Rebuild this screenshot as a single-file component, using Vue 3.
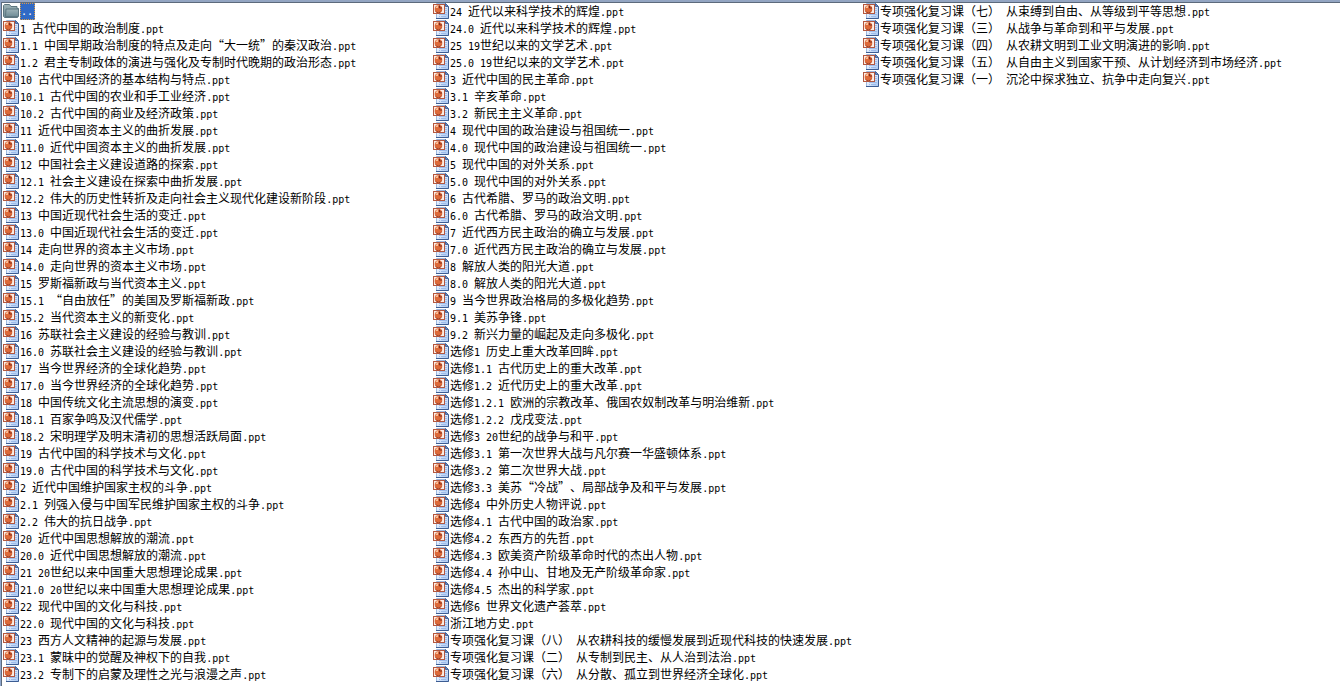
<script setup>
const names = `1 古代中国的政治制度
1.1 中国早期政治制度的特点及走向“大一统”的秦汉政治
1.2 君主专制政体的演进与强化及专制时代晚期的政治形态
10 古代中国经济的基本结构与特点
10.1 古代中国的农业和手工业经济
10.2 古代中国的商业及经济政策
11 近代中国资本主义的曲折发展
11.0 近代中国资本主义的曲折发展
12 中国社会主义建设道路的探索
12.1 社会主义建设在探索中曲折发展
12.2 伟大的历史性转折及走向社会主义现代化建设新阶段
13 中国近现代社会生活的变迁
13.0 中国近现代社会生活的变迁
14 走向世界的资本主义市场
14.0 走向世界的资本主义市场
15 罗斯福新政与当代资本主义
15.1 “自由放任”的美国及罗斯福新政
15.2 当代资本主义的新变化
16 苏联社会主义建设的经验与教训
16.0 苏联社会主义建设的经验与教训
17 当今世界经济的全球化趋势
17.0 当今世界经济的全球化趋势
18 中国传统文化主流思想的演变
18.1 百家争鸣及汉代儒学
18.2 宋明理学及明末清初的思想活跃局面
19 古代中国的科学技术与文化
19.0 古代中国的科学技术与文化
2 近代中国维护国家主权的斗争
2.1 列强入侵与中国军民维护国家主权的斗争
2.2 伟大的抗日战争
20 近代中国思想解放的潮流
20.0 近代中国思想解放的潮流
21 20世纪以来中国重大思想理论成果
21.0 20世纪以来中国重大思想理论成果
22 现代中国的文化与科技
22.0 现代中国的文化与科技
23 西方人文精神的起源与发展
23.1 蒙昧中的觉醒及神权下的自我
23.2 专制下的启蒙及理性之光与浪漫之声
24 近代以来科学技术的辉煌
24.0 近代以来科学技术的辉煌
25 19世纪以来的文学艺术
25.0 19世纪以来的文学艺术
3 近代中国的民主革命
3.1 辛亥革命
3.2 新民主主义革命
4 现代中国的政治建设与祖国统一
4.0 现代中国的政治建设与祖国统一
5 现代中国的对外关系
5.0 现代中国的对外关系
6 古代希腊、罗马的政治文明
6.0 古代希腊、罗马的政治文明
7 近代西方民主政治的确立与发展
7.0 近代西方民主政治的确立与发展
8 解放人类的阳光大道
8.0 解放人类的阳光大道
9 当今世界政治格局的多极化趋势
9.1 美苏争锋
9.2 新兴力量的崛起及走向多极化
选修1 历史上重大改革回眸
选修1.1 古代历史上的重大改革
选修1.2 近代历史上的重大改革
选修1.2.1 欧洲的宗教改革、俄国农奴制改革与明治维新
选修1.2.2 戊戌变法
选修3 20世纪的战争与和平
选修3.1 第一次世界大战与凡尔赛一华盛顿体系
选修3.2 第二次世界大战
选修3.3 美苏“冷战”、局部战争及和平与发展
选修4 中外历史人物评说
选修4.1 古代中国的政治家
选修4.2 东西方的先哲
选修4.3 欧美资产阶级革命时代的杰出人物
选修4.4 孙中山、甘地及无产阶级革命家
选修4.5 杰出的科学家
选修6 世界文化遗产荟萃
浙江地方史
专项强化复习课（八） 从农耕科技的缓慢发展到近现代科技的快速发展
专项强化复习课（二） 从专制到民主、从人治到法治
专项强化复习课（六） 从分散、孤立到世界经济全球化
专项强化复习课（七） 从束缚到自由、从等级到平等思想
专项强化复习课（三） 从战争与革命到和平与发展
专项强化复习课（四） 从农耕文明到工业文明演进的影响
专项强化复习课（五） 从自由主义到国家干预、从计划经济到市场经济
专项强化复习课（一） 沉沦中探求独立、抗争中走向复兴`.split('\n')

// Latin runs use a half-width monospaced face, the rest a full-width CJK face.
const files = names.map((name) => {
  const full = name + '.ppt'
  return {
    full,
    runs: full.match(/[\x20-\x7e]+|[^\x20-\x7e]+/g).map((text) => ({
      text,
      latin: /^[\x20-\x7e]/.test(text),
    })),
  }
})
</script>

<template>
  <svg class="defs" aria-hidden="true">
    <defs>
      <linearGradient id="sheet" x1="0" y1="0" x2="1" y2="1">
        <stop offset="0.3" stop-color="#f4f9ff" />
        <stop offset="1" stop-color="#a3c4f2" />
      </linearGradient>
      <linearGradient id="folder" x1="0" y1="0" x2="0" y2="1">
        <stop offset="0" stop-color="#9fb3b8" />
        <stop offset="1" stop-color="#6f8c96" />
      </linearGradient>
      <symbol id="ppt" viewBox="0 0 16 16">
        <path d="M3.5 0.5h9l3 3v12h-12z" fill="url(#sheet)" stroke="#9db8df" />
        <path d="M12.5 0.5v3h3z" fill="#6d8fc4" stroke="#46669c" />
        <path d="M15.5 4v11.5H3" fill="none" stroke="#3c5c92" />
        <path d="M12 5.5h2M12 7.500h2M12 9.500h2M6 11.500h8M6 13.500h1M8 13.500h5" stroke="#9dbbea" />
        <rect x="0.5" y="1.5" width="11" height="9" fill="#fbeee6" stroke="#b4573f" />
        <circle cx="5.500" cy="6" r="3.800" fill="#dd6a3a" />
        <path d="M2.500 5a3 3 0 0 1 2.500-2.300v2.300z" fill="#f9c19c" />
        <path d="M6.500 2.500v2.500h2.500" fill="none" stroke="#7e2a1a" />
        <path d="M2.500 8.500a3.800 3.800 0 0 0 6-.5" fill="none" stroke="#a33f22" />
      </symbol>
    </defs>
  </svg>
  <main class="pane" lang="zh-CN">
    <ul class="files">
      <li>
        <a class="file" href="#" aria-label="上级目录">
          <svg class="icon" viewBox="0 0 16 16" aria-hidden="true">
            <path d="M0.500 13.500v-11l1-1h5l1.500 2h6v2h1.500l-1 9h-13z" fill="url(#folder)" stroke="#5d7680" />
            <path d="M2.500 13.500l.5-7.500h12.500v7.500z" fill="url(#folder)" stroke="#5d7680" />
          </svg>
          <span class="name selected latin">..</span>
        </a>
      </li>
      <li v-for="file in files" :key="file.full">
        <a class="file" href="#">
          <svg class="icon" aria-hidden="true"><use href="#ppt" /></svg>
          <span class="name"><span v-for="(run, i) in file.runs" :key="i" :class="{ latin: run.latin }">{{ run.text }}</span></span>
        </a>
      </li>
    </ul>
  </main>
</template>

<style>
body {
  margin: 0;
  background: #fff;
}
</style>

<style scoped>
.defs {
  position: absolute;
  width: 0;
  height: 0;
}

.pane {
  box-sizing: border-box;
  min-height: 100vh;
  overflow: hidden;
  border-top: 2px solid #93a5c2;
  border-left: 1px solid #8fa6cc;
  box-shadow: inset 1px 1px 0 #5c6a7c;
  padding: 1px 0 0 2px;
  background: #fff;
}

.files {
  display: grid;
  grid-auto-flow: column;
  grid-template-rows: repeat(40, 17px);
  grid-auto-columns: 430px;
  margin: 0;
  padding: 0;
  list-style: none;
}

.file {
  display: flex;
  align-items: flex-start;
  gap: 1px;
  height: 17px;
  color: #000;
  text-decoration: none;
}

.icon {
  flex: none;
  width: 16px;
  height: 16px;
}

.name {
  font-family: "Noto Sans CJK SC", sans-serif;
  font-size: 12px;
  line-height: 15px;
  white-space: pre;
  text-spacing-trim: space-all;
}

.latin {
  font-family: "DejaVu Sans Mono", monospace;
  font-size: 10px;
}

.selected {
  box-sizing: border-box;
  width: 15px;
  height: 17px;
  border: 1px dotted #d89a4a;
  background: #316ac5;
  color: #fff;
}
</style>
